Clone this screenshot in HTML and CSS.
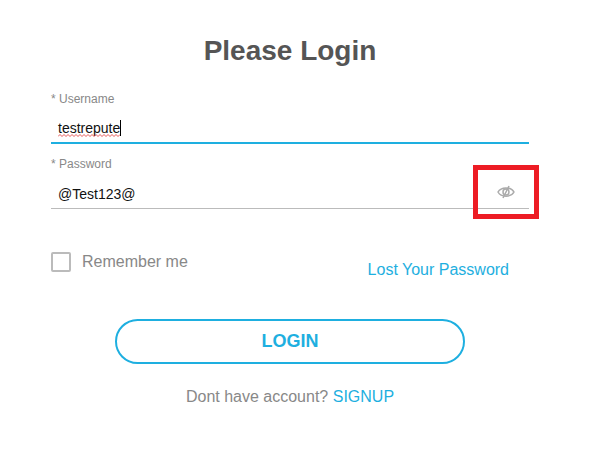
FILE: index.html
```html
<!DOCTYPE html>
<html lang="en">
<head>
<meta charset="utf-8">
<title>Please Login</title>
<link rel="stylesheet" href="styles.css">
</head>
<body>
<form class="login">
  <h1 class="title">Please Login</h1>
  <div class="field active">
    <label class="label">* Username</label>
    <div class="value"><span class="misspelled">testrepute<svg class="squiggle" width="62" height="3" viewBox="0 0 62 3"><path d="M0 2.5l2-2 2 2 2-2 2 2 2-2 2 2 2-2 2 2 2-2 2 2 2-2 2 2 2-2 2 2 2-2 2 2 2-2 2 2 2-2 2 2 2-2 2 2 2-2 2 2 2-2 2 2 2-2 2 2 2-2 2 2 2-2"/></svg></span><i class="caret"></i></div>
  </div>
  <div class="field">
    <label class="label">* Password</label>
    <div class="value">@Test123@
      <span class="highlight"><svg class="eye" width="18" height="14" viewBox="0 0 18 14"><path d="M1 7C4 1.5 14 1.5 17 7C14 12.5 4 12.5 1 7Z"/><circle cx="9" cy="7" r="3"/><path d="M12 1L6 13"/></svg></span>
    </div>
  </div>
  <div class="options">
    <label class="remember"><span class="box"></span>Remember me</label>
    <a class="lost">Lost Your Password</a>
  </div>
  <button class="submit" type="button">LOGIN</button>
  <p class="signup">Dont have account? <a>SIGNUP</a></p>
</form>
</body>
</html>
```
FILE: styles.css
```css
* { box-sizing: border-box; }
body { margin: 0; background: #fff; font-family: "Liberation Sans", Arial, sans-serif; }
.login { width: 478px; margin-left: 51px; padding-top: 34px; color: #888; }
.title { margin: 0; height: 56px; font-size: 28px; line-height: 34px; text-align: center; color: #555; }
.field { height: 65px; }
.label { display: block; height: 25px; font-size: 12px; line-height: 18px; }
.value { position: relative; display: flex; align-items: center; height: 29px; padding: 0 0 1px 7px; font-size: 14px; color: #111; border-bottom: 1px solid #bbb; }
.active .value { border-bottom: 2px solid #1eafe0; }
.misspelled { position: relative; }
.squiggle { position: absolute; left: 0; bottom: -1px; fill: none; stroke: #e03030; stroke-width: .8; }
.caret { width: 1px; height: 16px; background: #000; }
.highlight { position: absolute; left: 422px; top: -15px; width: 66px; height: 54px; border: 5px solid #ed1c24; display: flex; align-items: center; justify-content: center; }
.eye { fill: none; stroke: #aaa; stroke-width: 1.5; }
.options { display: flex; justify-content: space-between; padding: 32px 20px 0 0; height: 99px; font-size: 16px; line-height: 20px; }
.remember { display: flex; height: 20px; gap: 11px; }
.box { width: 20px; height: 20px; border: 2px solid #bbb; border-radius: 2px; }
.lost { margin-top: 8px; }
a { color: #1eafe0; }
.submit { display: block; width: 350px; height: 45px; margin: 0 auto; border: 2px solid #1eafe0; border-radius: 23px; background: #fff; color: #1eafe0; font: bold 18px "Liberation Sans", Arial, sans-serif; }
.signup { margin: 23px 0 0; font-size: 16px; line-height: 20px; text-align: center; }
```
